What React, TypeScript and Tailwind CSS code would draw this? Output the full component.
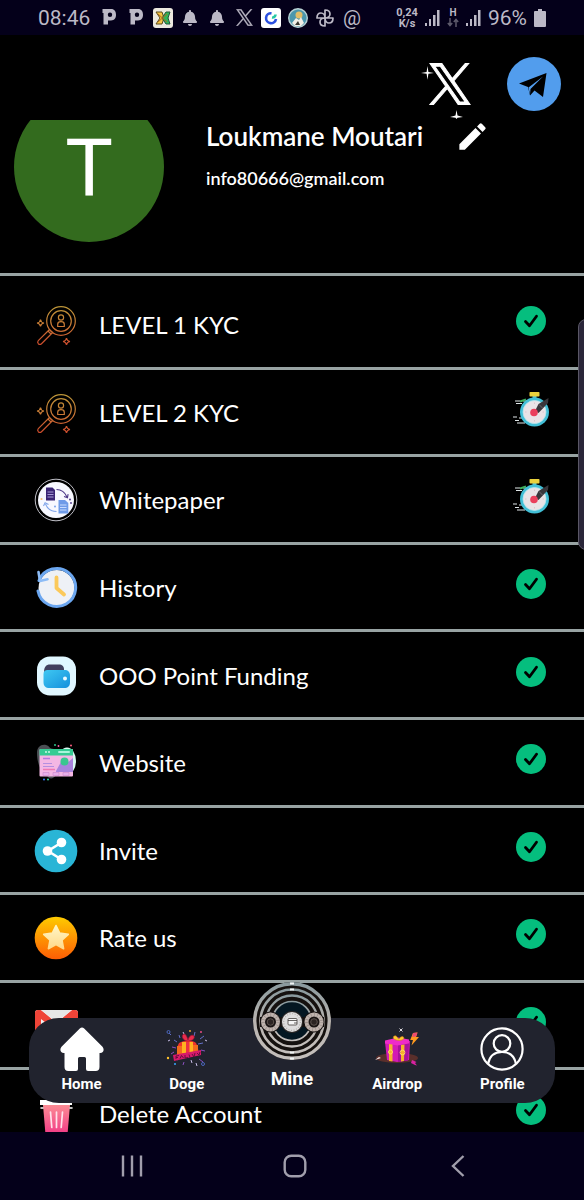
import type { ReactNode } from "react";
import { FaBell } from "react-icons/fa";
import { MdEdit } from "react-icons/md";

const ICON = "size-11 shrink-0";

function XLogo({ className }: { className?: string }) {
  return (
    <svg
      viewBox="-15 -15 1230 1257"
      className={className}
      fill="currentColor"
      stroke="currentColor"
      strokeWidth="30"
      aria-hidden="true"
    >
      <path d="M714.163 519.284L1160.89 0H1055.03L667.137 450.887L357.328 0H0L468.492 681.821L0 1226.37H105.866L515.491 750.218L842.672 1226.37H1200L714.137 519.284H714.163ZM569.165 687.828L521.697 619.934L144.011 79.6944H306.615L611.412 515.685L658.88 583.579L1055.08 1150.3H892.476L569.165 687.854V687.828Z" />
    </svg>
  );
}

/* ---------- status bar ---------- */

function PandoraIcon() {
  return (
    <svg viewBox="0 0 20 20" className="size-5" aria-hidden="true">
      <path
        fillRule="evenodd"
        fill="currentColor"
        d="M3.500 1h8.500c3.600 0 5 2.600 5 5.800s-1.400 5.700-5 5.700H9v4H4.500V5h-1zM11 4.500a2.200 2.200 0 1 0 0 4.400 2.200 2.200 0 0 0 0-4.400z"
      />
    </svg>
  );
}

function SignalIcon() {
  return (
    <svg viewBox="0 0 15 18" className="h-[18px] w-[15px]" fill="currentColor" aria-hidden="true">
      <rect x="0" y="14" width="2" height="3" />
      <rect x="4" y="10" width="2" height="7" />
      <rect x="8" y="6" width="2.500" height="11" />
      <rect x="12" y="1" width="2.500" height="16" />
    </svg>
  );
}

function StatusBar() {
  return (
    <div className="flex h-[35px] shrink-0 items-center justify-between bg-[#04001a] px-[38px] font-['Roboto',sans-serif] text-[#bcb9c6]">
      <div className="flex items-center gap-[7px]">
        <span className="w-[54px] text-[21px] leading-6">08:46</span>
        <PandoraIcon />
        <PandoraIcon />
        <svg viewBox="0 0 20 20" className="size-5" aria-hidden="true">
          <rect width="20" height="20" rx="3" fill="#ece9df" />
          <path d="M3 4h6l2 6-2 6H3l4-6z" fill="#f4c542" stroke="#5b4b1c" strokeWidth="1" />
          <path d="M17 4h-4l-4 6 4 6h4l-2-6z" fill="#2fb45a" stroke="#23563a" strokeWidth="1" />
          <path d="M5 6l9 8M5 14l9-8" stroke="#b1671e" strokeWidth="1" />
        </svg>
        <span className="flex w-5 justify-center"><FaBell size={16} /></span>
        <span className="flex w-5 justify-center"><FaBell size={16} /></span>
        <span className="flex w-5 justify-center"><XLogo className="size-[17px]" /></span>
        <svg viewBox="0 0 20 20" className="size-5" aria-hidden="true">
          <rect width="20" height="20" rx="3" fill="#fff" />
          <path d="M10.500 5.200A5 5 0 1 0 15 11" fill="none" stroke="#2b50e0" strokeWidth="2.600" />
          <path d="M11 9.500a3 3 0 0 0 3.500-3" fill="none" stroke="#25c7a5" strokeWidth="2.600" />
        </svg>
        <svg viewBox="0 0 20 20" className="size-5" aria-hidden="true">
          <circle cx="10" cy="10" r="9.300" fill="#4b97ad" stroke="#b9d2d4" strokeWidth="1.400" />
          <circle cx="11" cy="7" r="3.500" fill="#e0bd68" />
          <path d="M4 15l4-5 3 2 2-3 3 6-3 3H7z" fill="#f1efe6" />
          <path d="M7 17l3-4 2 4z" fill="#3a3a30" />
        </svg>
        <svg viewBox="0 0 20 20" className="size-5" fill="none" stroke="currentColor" strokeWidth="1.700" strokeLinejoin="round" aria-hidden="true">
          <path d="M10 10V2c4 0 5 2 5 4s-2 4-5 4zM10 10h8c0 4-2 5-4 5s-4-2-4-5zM10 10v8c-4 0-5-2-5-4s2-4 5-4zM10 10H2c0-4 2-5 4-5s4 2 4 5z" />
        </svg>
        <span className="w-5 text-center text-[20px] leading-6">@</span>
      </div>
      <div className="flex items-center gap-[7px]">
        <span className="w-[22px] text-center text-[11px] leading-[11px] font-bold">
          0,24
          <br />
          K/s
        </span>
        <SignalIcon />
        <span className="flex w-3 flex-col items-center text-[10px] leading-[10px] font-bold">
          H
          <svg viewBox="0 0 12 9" className="h-[9px] w-3" fill="none" stroke="#5d5a6b" strokeWidth="1.500" aria-hidden="true">
            <path d="M3 0v7M.8 5L3 7.500 5.200 5M9 9V2M6.800 4L9 1.500 11.200 4" />
          </svg>
        </span>
        <SignalIcon />
        <span className="text-[21px] leading-6">96%</span>
        <svg viewBox="0 0 12 18" className="h-[18px] w-3" fill="currentColor" aria-hidden="true">
          <path d="M4 0h4v2h3a1 1 0 0 1 1 1v14a1 1 0 0 1-1 1H1a1 1 0 0 1-1-1V3a1 1 0 0 1 1-1h3z" />
        </svg>
      </div>
    </div>
  );
}

/* ---------- menu icons ---------- */

function KycIcon() {
  return (
    <svg viewBox="0 0 44 44" className={ICON} fill="none" stroke="url(#kyc)" strokeWidth="1.200" aria-hidden="true">
      <defs>
        <linearGradient id="kyc" x1="0" y1="0" x2="0" y2="44" gradientUnits="userSpaceOnUse">
          <stop offset="0" stopColor="#b99a38" />
          <stop offset="0.500" stopColor="#c97a36" />
          <stop offset="1" stopColor="#cc452b" />
        </linearGradient>
      </defs>
      <circle cx="27" cy="18" r="14.300" />
      <circle cx="27" cy="18" r="10.300" />
      <circle cx="27" cy="14.500" r="2.600" />
      <path d="M23.700 23.500v-2.300c0-1.600 1.200-2.600 3.300-2.600s3.300 1 3.300 2.600v2.300z" />
      <path d="M15.500 26.500L4.300 37.700a2.300 2.300 0 0 0 0 3 2.300 2.300 0 0 0 3.200 0L18.700 29.500zM14 28l3 3" />
      <path d="M6.500 16.500c.3 2.500 1 3.200 3.500 3.500-2.500.3-3.200 1-3.500 3.500-.3-2.500-1-3.200-3.500-3.500 2.500-.3 3.200-1 3.500-3.500zM32.500 35c.3 2.500 1 3.200 3.500 3.500-2.500.3-3.200 1-3.500 3.500-.3-2.500-1-3.200-3.500-3.500 2.500-.3 3.200-1 3.500-3.500z" />
    </svg>
  );
}

function WhitepaperIcon() {
  return (
    <svg viewBox="0 0 44 44" className={ICON} aria-hidden="true">
      <circle cx="22" cy="22" r="20.800" fill="#000" stroke="#d5d5dc" strokeWidth="0.900" />
      <circle cx="22" cy="22" r="18" fill="#f7f8ff" />
      <path d="M12 9.500h6.500L21 12v10.500h-9z" fill="#3a2474" />
      <path d="M13.500 14h6M13.500 16.500h6M13.500 19h6" stroke="#a79bd6" strokeWidth="1" />
      <path d="M24.500 22h6.500l3.300 3v10.500h-9.800z" fill="#6f9be8" />
      <path d="M26 27h6.500M26 29.500h6.500M26 32h6.500" stroke="#c9dcff" strokeWidth="1" />
      <path d="M22.500 11.500c5 0 8.500 3 10.500 7.500M30 18.500l3.500 1.200.6-3.500" fill="none" stroke="#4c3788" strokeWidth="1.100" />
      <path d="M22.500 33.500c-5 0-9-2.500-11-7.500M9.500 28l1.600-3.200 3.400 1.600" fill="none" stroke="#7fa4ea" strokeWidth="1.100" />
      <circle cx="7.500" cy="21" r="1.100" fill="#f0bf72" />
      <circle cx="36" cy="21.500" r="1" fill="#4c3788" />
      <circle cx="37" cy="25" r="0.900" fill="#4c3788" />
      <circle cx="21" cy="28.500" r="0.900" fill="#6f9be8" />
    </svg>
  );
}

function HistoryIcon() {
  return (
    <svg viewBox="0 0 44 44" className={ICON} aria-hidden="true">
      <circle cx="22.500" cy="22" r="18" fill="#eef1f6" />
      <path d="M5 14.500A19 19 0 1 1 4 25" fill="none" stroke="#6ba6ef" strokeWidth="3" strokeLinecap="round" />
      <path d="M4.500 6l1.500 9 7.500-1.800" fill="none" stroke="#8dbcf6" strokeWidth="2.600" strokeLinecap="round" strokeLinejoin="round" />
      <path d="M22.500 11.500V22l7.500 6.500" fill="none" stroke="#fbc95a" strokeWidth="3.800" strokeLinecap="round" strokeLinejoin="round" />
    </svg>
  );
}

function WalletIcon() {
  return (
    <svg viewBox="0 0 44 44" className={ICON} aria-hidden="true">
      <defs>
        <linearGradient id="wallet" x1="0" y1="0" x2="1" y2="1">
          <stop offset="0" stopColor="#3fc8f2" />
          <stop offset="1" stopColor="#1490dc" />
        </linearGradient>
      </defs>
      <rect x="3" y="2.500" width="39" height="39" rx="13" fill="#e0f7ff" />
      <path d="M10 18c0-5 2-7.500 6-7.500h9c3 0 5 1.500 5 5v2z" fill="#41405e" />
      <path d="M9.500 20c0-2.500 1.500-4 4-4h17c3.500 0 5.500 2 5.500 5.500V28c0 4-2 6-6 6H15.500c-4 0-6-2-6-6z" fill="url(#wallet)" />
      <circle cx="31" cy="24.500" r="2" fill="#eafaff" />
    </svg>
  );
}

function WebsiteIcon() {
  return (
    <svg viewBox="0 0 44 44" className={ICON} aria-hidden="true">
      <path d="M3 12c0-6 4-9 9-8 4 1 3 4 8 4l2 26c-3 5-8 4-9 0-5-2-10-10-10-22z" fill="#4b4f54" />
      <ellipse cx="33" cy="20" rx="9" ry="13.500" fill="#d9fbf3" />
      <rect x="5.500" y="8" width="33.500" height="27.500" rx="1" fill="#f4b7e4" />
      <path d="M5.500 9a1 1 0 0 1 1-1H38a1 1 0 0 1 1 1v5.500H5.500z" fill="#35cc93" />
      <rect x="24" y="10" width="12" height="2" rx="1" fill="#a8f5da" />
      <circle cx="12" cy="11" r="0.900" fill="#d8ffee" />
      <circle cx="15" cy="11" r="0.900" fill="#d8ffee" />
      <path d="M22 30l5-9 4 3 8-7v14H22z" fill="#a984dd" />
      <circle cx="30.500" cy="20.500" r="4" fill="#38c78f" />
      <path d="M9 17.500h7" stroke="#b479dc" strokeWidth="1.500" />
      <path d="M9 22.500h9M9 25.500h11" stroke="#b48fe0" strokeWidth="1.200" />
      <path d="M9 28.500h12" stroke="#ee78b4" strokeWidth="1.500" />
      <path d="M9 31.500h6v3H9zM19 31.500h6v3h-6zM29 31.500h6v3h-6z" fill="#e7b0ea" stroke="#cf86cc" strokeWidth="0.600" />
      <circle cx="21" cy="4" r="0.900" fill="#32d79b" />
      <circle cx="24.500" cy="5" r="0.900" fill="#ff5fa8" />
      <circle cx="37" cy="4.500" r="1" fill="#ff5f7f" />
      <circle cx="10" cy="38.500" r="1" fill="#3f78ff" />
      <circle cx="14" cy="38.500" r="1" fill="#32d79b" />
    </svg>
  );
}

function InviteIcon() {
  return (
    <svg viewBox="0 0 44 44" className={ICON} aria-hidden="true">
      <circle cx="22" cy="22" r="21.300" fill="#29b5d6" />
      <path d="M27.500 13.500L14 22l13.500 8.500" fill="none" stroke="#fff" strokeWidth="2.600" />
      <circle cx="13.500" cy="22" r="4.800" fill="#fff" />
      <circle cx="27.500" cy="13.500" r="4.800" fill="#fff" />
      <circle cx="27.500" cy="30.500" r="4.800" fill="#fff" />
    </svg>
  );
}

function RateIcon() {
  return (
    <svg viewBox="0 0 44 44" className={ICON} aria-hidden="true">
      <defs>
        <linearGradient id="rate" x1="0" y1="0" x2="0" y2="1">
          <stop offset="0" stopColor="#fecb00" />
          <stop offset="1" stopColor="#fd5d05" />
        </linearGradient>
        <linearGradient id="star" x1="0" y1="0" x2="0" y2="1">
          <stop offset="0" stopColor="#fff6c5" />
          <stop offset="1" stopColor="#ffd98a" />
        </linearGradient>
      </defs>
      <circle cx="22" cy="22" r="21.300" fill="url(#rate)" />
      <path
        d="M22 9.500l3.700 7.600 8.600 1.200-6.300 5.900 1.600 8.500-7.600-4.100-7.600 4.100 1.600-8.500-6.300-5.900 8.600-1.200z"
        fill="url(#star)"
        stroke="url(#star)"
        strokeWidth="1.600"
        strokeLinejoin="round"
      />
    </svg>
  );
}

function GmailIcon() {
  return (
    <svg viewBox="0 0 44 44" className={ICON} aria-hidden="true">
      <rect x="1" y="6" width="43" height="32" rx="3" fill="#f2f2f2" />
      <path d="M1 9a3 3 0 0 1 3-3h3l15.500 13L38 6h3a3 3 0 0 1 3 3v26a3 3 0 0 1-3 3h-3V15L22.500 27 7 15v23H4a3 3 0 0 1-3-3z" fill="#ef4438" />
      <path d="M7 6h31L22.500 18z" fill="#e6e6e6" />
    </svg>
  );
}

function TrashIcon() {
  return (
    <svg viewBox="0 0 44 44" className={ICON} aria-hidden="true">
      <defs>
        <linearGradient id="trash" x1="0" y1="0" x2="0" y2="1">
          <stop offset="0" stopColor="#fb8b94" />
          <stop offset="1" stopColor="#f23a86" />
        </linearGradient>
      </defs>
      <path d="M6 8h32v5H6z" fill="#fff" />
      <path d="M9 13h27l-2.500 29.500h-22z" fill="url(#trash)" />
      <path d="M7 16h2M36 16h2" stroke="#fff" strokeWidth="1.600" strokeLinecap="round" />
      <path d="M16.500 20l1.300 15.500M22.500 20v15.500M28.500 20l-1.300 15.500" stroke="#ffe1ea" strokeWidth="1.700" strokeLinecap="round" />
    </svg>
  );
}

function CheckIcon() {
  return (
    <svg viewBox="0 0 30 30" className="size-[30px]" role="img" aria-label="Done">
      <circle cx="15" cy="15" r="15" fill="#05be7e" />
      <path d="M9.500 15.500l4 4.300 7-9.600" fill="none" stroke="#000" strokeWidth="2.800" strokeLinecap="round" strokeLinejoin="round" />
    </svg>
  );
}

function StopwatchIcon() {
  return (
    <svg viewBox="0 0 40 40" className="size-10" role="img" aria-label="Pending">
      <path d="M4 12h5M12 12h4M5 14.500h6M2 28h4M8 29h4M4 31.500h4M6 34h8" stroke="#dfe6e8" strokeWidth="1.100" />
      <path d="M9 12.500l6-2" stroke="#3fae5c" strokeWidth="2" />
      <rect x="21.500" y="6" width="4" height="5" fill="#4bbfd3" />
      <rect x="18.500" y="3" width="10" height="4.500" rx="0.800" fill="#ead13c" />
      <circle cx="23.500" cy="23" r="14.500" fill="#42bfd6" />
      <circle cx="23.500" cy="23" r="11.500" fill="#e9e3e6" stroke="#b7e6ee" strokeWidth="0.800" />
      <path d="M23.500 13.500v1.500M23.500 31v1.500M14 23h1.500M31.500 23H33" stroke="#d6c0c8" strokeWidth="0.800" />
      <path d="M24 22l3.500-7L37.500 9l-.5 5-9.500 10z" fill="#38363b" />
      <path d="M28 15.500l3.500 3.500" stroke="#77747c" strokeWidth="0.800" />
      <circle cx="23" cy="23.500" r="3.800" fill="#ea3f5c" />
    </svg>
  );
}

/* ---------- tab icons ---------- */

function HomeIcon() {
  return (
    <svg viewBox="0 0 44 44" className="size-11" aria-hidden="true">
      <path
        d="M19.800 1.500a3.200 3.200 0 0 1 4.400 0l18.300 18.300c2.200 2.600 1 6.200-2.300 6.200H39.500v14c0 2.500-1.300 4-3.800 4H28a2 2 0 0 1-2-2V31.500a1.500 1.500 0 0 0-1.500-1.500h-5a1.500 1.500 0 0 0-1.500 1.500V42a2 2 0 0 1-2 2H8.300c-2.500 0-3.800-1.500-3.800-4V26H3.800C.5 26-.7 22.400 1.500 19.800z"
        fill="#fff"
      />
    </svg>
  );
}

function DogeIcon() {
  return (
    <svg viewBox="0 0 44 44" className="size-11" aria-hidden="true">
      <g fill="none" strokeWidth="1">
        <path d="M4 6l2 2M9 13l3 2M14 8l1 3M30 5l-1 4M35 12l4-3M33 17l5-1" stroke="#6570c9" />
        <path d="M7 20l4 1M6 27l3-2M12 33l3-2M18 38l1-3M36 23l4 1M34 32l4 3" stroke="#8a4fc0" />
        <path d="M18 5l1 2M40 13l2 1M3 14l2-1M31 36l1 3M26 33l1 3" stroke="#c9bfe8" />
        <circle cx="3.500" cy="5" r="1.500" stroke="#4b67bd" />
        <circle cx="38" cy="37" r="1.500" stroke="#4b67bd" />
      </g>
      <circle cx="25" cy="4" r="0.900" fill="#ffb02e" />
      <circle cx="10" cy="37" r="1" fill="#37a7ff" />
      <circle cx="3" cy="31" r="1.200" fill="#ffc22e" />
      <circle cx="36" cy="5" r="0.900" fill="#ff4f8d" />
      <path d="M14 16c5-3 14-3 17 0 2 4 3 8 2 12H13c-1-5-1-9 1-12z" fill="#f0332c" />
      <path d="M12 19h6v9h-6zM27 18h6v9h-6z" fill="#f26a1d" />
      <path d="M17 15h11v11H17z" fill="#ffb21f" />
      <path d="M21 15h3.500v12H21z" fill="#ee2f43" />
      <path d="M22 14c-5-1-6-6-3-7 2 0 3 3 4 6 1-4 4-6 6-4 1 3-2 5-7 5z" fill="#ea2c4c" stroke="#a81334" strokeWidth="0.700" />
      <path d="M8 28l28-5v5L9 34z" fill="#d71a6b" />
      <path d="M11 29v3M11 29l3-.5M11 30.500h2M15 31.500l1.500-3 2 2.500M20 28v3l3-.5M24 27.500l1 3M27 27l2 3 1-4M32 26l2 2 1-3" fill="none" stroke="#5e0b3a" strokeWidth="0.900" />
    </svg>
  );
}

function SideDisc({ cx }: { cx: number }) {
  return (
    <g>
      <circle cx={cx} cy="41" r="10.500" fill="#191413" />
      <circle cx={cx} cy="41" r="7.500" fill="none" stroke="#bfb3ad" strokeWidth="4" />
      <circle cx={cx} cy="41" r="7.500" fill="none" stroke="#8d837e" strokeWidth="4" strokeDasharray="0.500 2.700" />
      <circle cx={cx} cy="41" r="3.300" fill="#2b2422" stroke="#5d534e" strokeWidth="1" />
    </g>
  );
}

function MineIcon() {
  return (
    <svg viewBox="0 0 80 80" className="size-20" aria-hidden="true">
      <defs>
        <linearGradient id="ring" x1="0" y1="0" x2="0" y2="1">
          <stop offset="0" stopColor="#8a9a9e" />
          <stop offset="0.500" stopColor="#b9b4b0" />
          <stop offset="1" stopColor="#c4bfbc" />
        </linearGradient>
      </defs>
      <circle cx="40" cy="40" r="39" fill="#15110f" />
      <circle cx="40" cy="40" r="20" fill="#041722" />
      <g fill="none" stroke="url(#ring)">
        <circle cx="40" cy="40" r="37.300" strokeWidth="3.400" />
        <circle cx="40" cy="40" r="31.500" strokeWidth="2.600" />
        <circle cx="40" cy="40" r="25.500" strokeWidth="2.300" />
        <circle cx="40" cy="40" r="19.500" strokeWidth="1.700" />
      </g>
      <path d="M38 2.500h4M38 8.500h4M38 77.500h4M38 71.500h4" stroke="#f0f4f4" strokeWidth="2" />
      <path d="M8 36h64v10H8z" fill="#15110f" />
      <SideDisc cx={18.500} />
      <SideDisc cx={62} />
      <circle cx="40" cy="41" r="11" fill="#2a2726" />
      <circle cx="40" cy="41" r="10" fill="#dedddd" />
      <circle cx="40" cy="41" r="8.300" fill="none" stroke="#b5b1ae" strokeWidth="1.200" strokeDasharray="1 1.600" />
      <rect x="36" y="37.500" width="9" height="6.500" rx="1" fill="#f6f6f6" stroke="#44403e" strokeWidth="0.800" />
      <path d="M36 39.500h9M42 42h3" stroke="#44403e" strokeWidth="0.800" />
    </svg>
  );
}

function AirdropIcon() {
  return (
    <svg viewBox="0 0 44 44" className="size-11" aria-hidden="true">
      <ellipse cx="22" cy="31" rx="21" ry="5" fill="#5a2f2b" />
      <path d="M0 33l4-3 2 1z" fill="#f4e8e8" />
      <path d="M10 15l12-3 13 2-1 19-12 2-10-2z" fill="#d31bb4" />
      <path d="M10 13.500l13-3 11 2v4l-11 2-13-2z" fill="#ee2bc9" />
      <path d="M23 18.500l11-2-1 17-10 1.500z" fill="#a9109c" />
      <path d="M14 17l3.500.6V34.500L14 34zM26 18l3.500-.6-.5 16.600-3 .6z" fill="#f7b32c" />
      <path d="M21 13c-4-1-3-5 0-4 2 1 2 3 3 3 2-3 4-3 5-1 0 2-4 3-8 2z" fill="#ffc832" stroke="#ce7b14" strokeWidth="0.600" />
      <circle cx="15.500" cy="25" r="2" fill="none" stroke="#ffdf5e" strokeWidth="1" />
      <circle cx="27.500" cy="25.500" r="2.400" fill="none" stroke="#ffdf5e" strokeWidth="1" />
      <path d="M24.500 1.500l3 3M27.500 1.500l-3 3" stroke="#f2eef4" strokeWidth="0.900" />
      <path d="M38 6l4.500-.5L41 10h3l-7.500 8.500 1.500-5.500h-2.800z" fill="#ff9a1e" />
      <path d="M38 6l4.500-.5-1.300 4-4 .5z" fill="#ee4a70" />
      <path d="M37 33l4.500 2-1.500 1 2 2.500-2-.5-4-2z" fill="#d822a0" />
    </svg>
  );
}

function ProfileIcon() {
  return (
    <svg viewBox="0 0 44 44" className="size-11" fill="none" stroke="#fff" strokeWidth="2.200" aria-hidden="true">
      <circle cx="22" cy="22" r="20.600" />
      <circle cx="22" cy="16.500" r="8.300" />
      <path d="M8 37c1.500-8 7-12 14-12s12.500 4 14 12" />
    </svg>
  );
}

/* ---------- screen ---------- */

type MenuItem = { label: string; icon: ReactNode; pending?: boolean };

const menu: MenuItem[] = [
  { label: "LEVEL 1 KYC", icon: <KycIcon /> },
  { label: "LEVEL 2 KYC", icon: <KycIcon />, pending: true },
  { label: "Whitepaper", icon: <WhitepaperIcon />, pending: true },
  { label: "History", icon: <HistoryIcon /> },
  { label: "OOO Point Funding", icon: <WalletIcon /> },
  { label: "Website", icon: <WebsiteIcon /> },
  { label: "Invite", icon: <InviteIcon /> },
  { label: "Rate us", icon: <RateIcon /> },
  { label: "Contact Us", icon: <GmailIcon /> },
  { label: "Delete Account", icon: <TrashIcon /> },
];

const tabs = [
  { label: "Home", icon: <HomeIcon /> },
  { label: "Doge", icon: <DogeIcon /> },
  { label: "Mine", icon: <MineIcon />, main: true },
  { label: "Airdrop", icon: <AirdropIcon /> },
  { label: "Profile", icon: <ProfileIcon /> },
];

function ProfileHeader() {
  return (
    <header className="border-b-[3px] border-[#98a3a3] pb-[31px]">
      <div className="flex h-[85px] items-start justify-end gap-9 pt-[22px] pr-[23px]">
        <a href="#x" aria-label="X" className="relative mt-[6px] text-white">
          <XLogo className="size-[42px]" />
          <svg viewBox="0 0 56 64" className="absolute -top-1 -left-2 h-16 w-14" fill="#fff" aria-hidden="true">
            <path d="M6.500 7l.9 6 5.600.9-5.600.9-.9 6-.9-6-5.600-.9 5.600-.9zM35.500 51l1 5.500 5.500 1.500-5.500.8-1 1.200-1-1.200-5.500-.8 5.500-1.500z" />
          </svg>
        </a>
        <a href="#telegram" aria-label="Telegram">
          <svg viewBox="0 0 54 54" className="size-[54px]" aria-hidden="true">
            <circle cx="27" cy="27" r="27" fill="#529ded" />
            <path d="M12 26.500L39.500 16 36 40l-8.500-6.500-4.500 5-2-8.500z" fill="#000" />
            <path d="M21.500 30.500L36 19.500 23.500 32l-.5 5.500z" fill="#529ded" />
          </svg>
        </a>
      </div>
      <div className="flex items-start pl-[14px]">
        <div className="h-[122px] w-[150px] shrink-0 overflow-hidden">
          <div className="-mt-7 flex size-[150px] items-center justify-center rounded-full bg-[#336b1e] pt-1 font-['Roboto',sans-serif] text-[80px] leading-none text-white">
            T
          </div>
        </div>
        <div className="ml-[42px]">
          <div className="flex h-8 items-center gap-8">
            <h1 className="text-[26px] leading-8 font-semibold">Loukmane Moutari</h1>
            <button type="button" aria-label="Edit name">
              <MdEdit size={35} />
            </button>
          </div>
          <p className="mt-[14px] text-[18px] leading-6 font-semibold">info80666@gmail.com</p>
        </div>
      </div>
    </header>
  );
}

function TabBar() {
  return (
    <nav className="absolute inset-x-[29px] bottom-[29px] grid h-[85px] grid-cols-5 grid-rows-1 rounded-[30px] bg-[#21232e] font-['Roboto',sans-serif] font-bold">
      {tabs.map((tab) => (
        <a
          key={tab.label}
          href={`#${tab.label.toLowerCase()}`}
          className={`flex min-h-0 flex-col items-center justify-end ${tab.main ? "gap-[6px] pb-3" : "gap-[3px] pb-[9px]"}`}
        >
          <span className="shrink-0">{tab.icon}</span>
          <span className={tab.main ? "text-[19px] leading-6" : "text-[15px] leading-5"}>{tab.label}</span>
        </a>
      ))}
    </nav>
  );
}

function SystemNav() {
  return (
    <div className="grid h-[68px] shrink-0 grid-cols-3 bg-[#04001a] pr-[44px] pl-[50px] text-[#a19eac]">
      <button type="button" aria-label="Recent apps" className="flex items-center justify-center">
        <svg viewBox="0 0 24 24" className="size-6" stroke="currentColor" strokeWidth="2.400">
          <path d="M3 1.500v21M12 1.500v21M21 1.500v21" />
        </svg>
      </button>
      <button type="button" aria-label="Home screen" className="flex items-center justify-center">
        <svg viewBox="0 0 24 24" className="size-6" fill="none" stroke="currentColor" strokeWidth="2.400">
          <rect x="1.700" y="1.700" width="20.600" height="20.600" rx="6.500" />
        </svg>
      </button>
      <button type="button" aria-label="Back" className="flex items-center justify-center">
        <svg viewBox="0 0 24 24" className="size-6" fill="none" stroke="currentColor" strokeWidth="2.400">
          <path d="M17.500 2L7 12l10.500 10" />
        </svg>
      </button>
    </div>
  );
}

export default function App() {
  return (
    <div className="relative flex h-screen flex-col overflow-hidden bg-black font-['Lato',sans-serif] text-white">
      <StatusBar />
      <main className="relative min-h-0 flex-1 overflow-hidden">
        <ProfileHeader />
        <ul className="mt-[6px] grid h-[876px] auto-rows-fr">
          {menu.map((item) => (
            <li key={item.label} className="border-b-[3px] border-[#98a3a3]">
              <button type="button" className="flex size-full items-center gap-[21px] pt-[2px] pr-[33px] pl-[34px] text-left">
                {item.icon}
                <span className="flex-1 text-[24px] leading-8">{item.label}</span>
                <span className="flex w-10 justify-center pb-2">
                  {item.pending ? <StopwatchIcon /> : <CheckIcon />}
                </span>
              </button>
            </li>
          ))}
        </ul>
        <TabBar />
      </main>
      <SystemNav />
      {/* edge panel handle */}
      <div className="absolute top-[319px] -right-1 h-[231px] w-[10px] rounded-l-lg border border-[#5a5766] bg-[#2a2639]" />
    </div>
  );
}
